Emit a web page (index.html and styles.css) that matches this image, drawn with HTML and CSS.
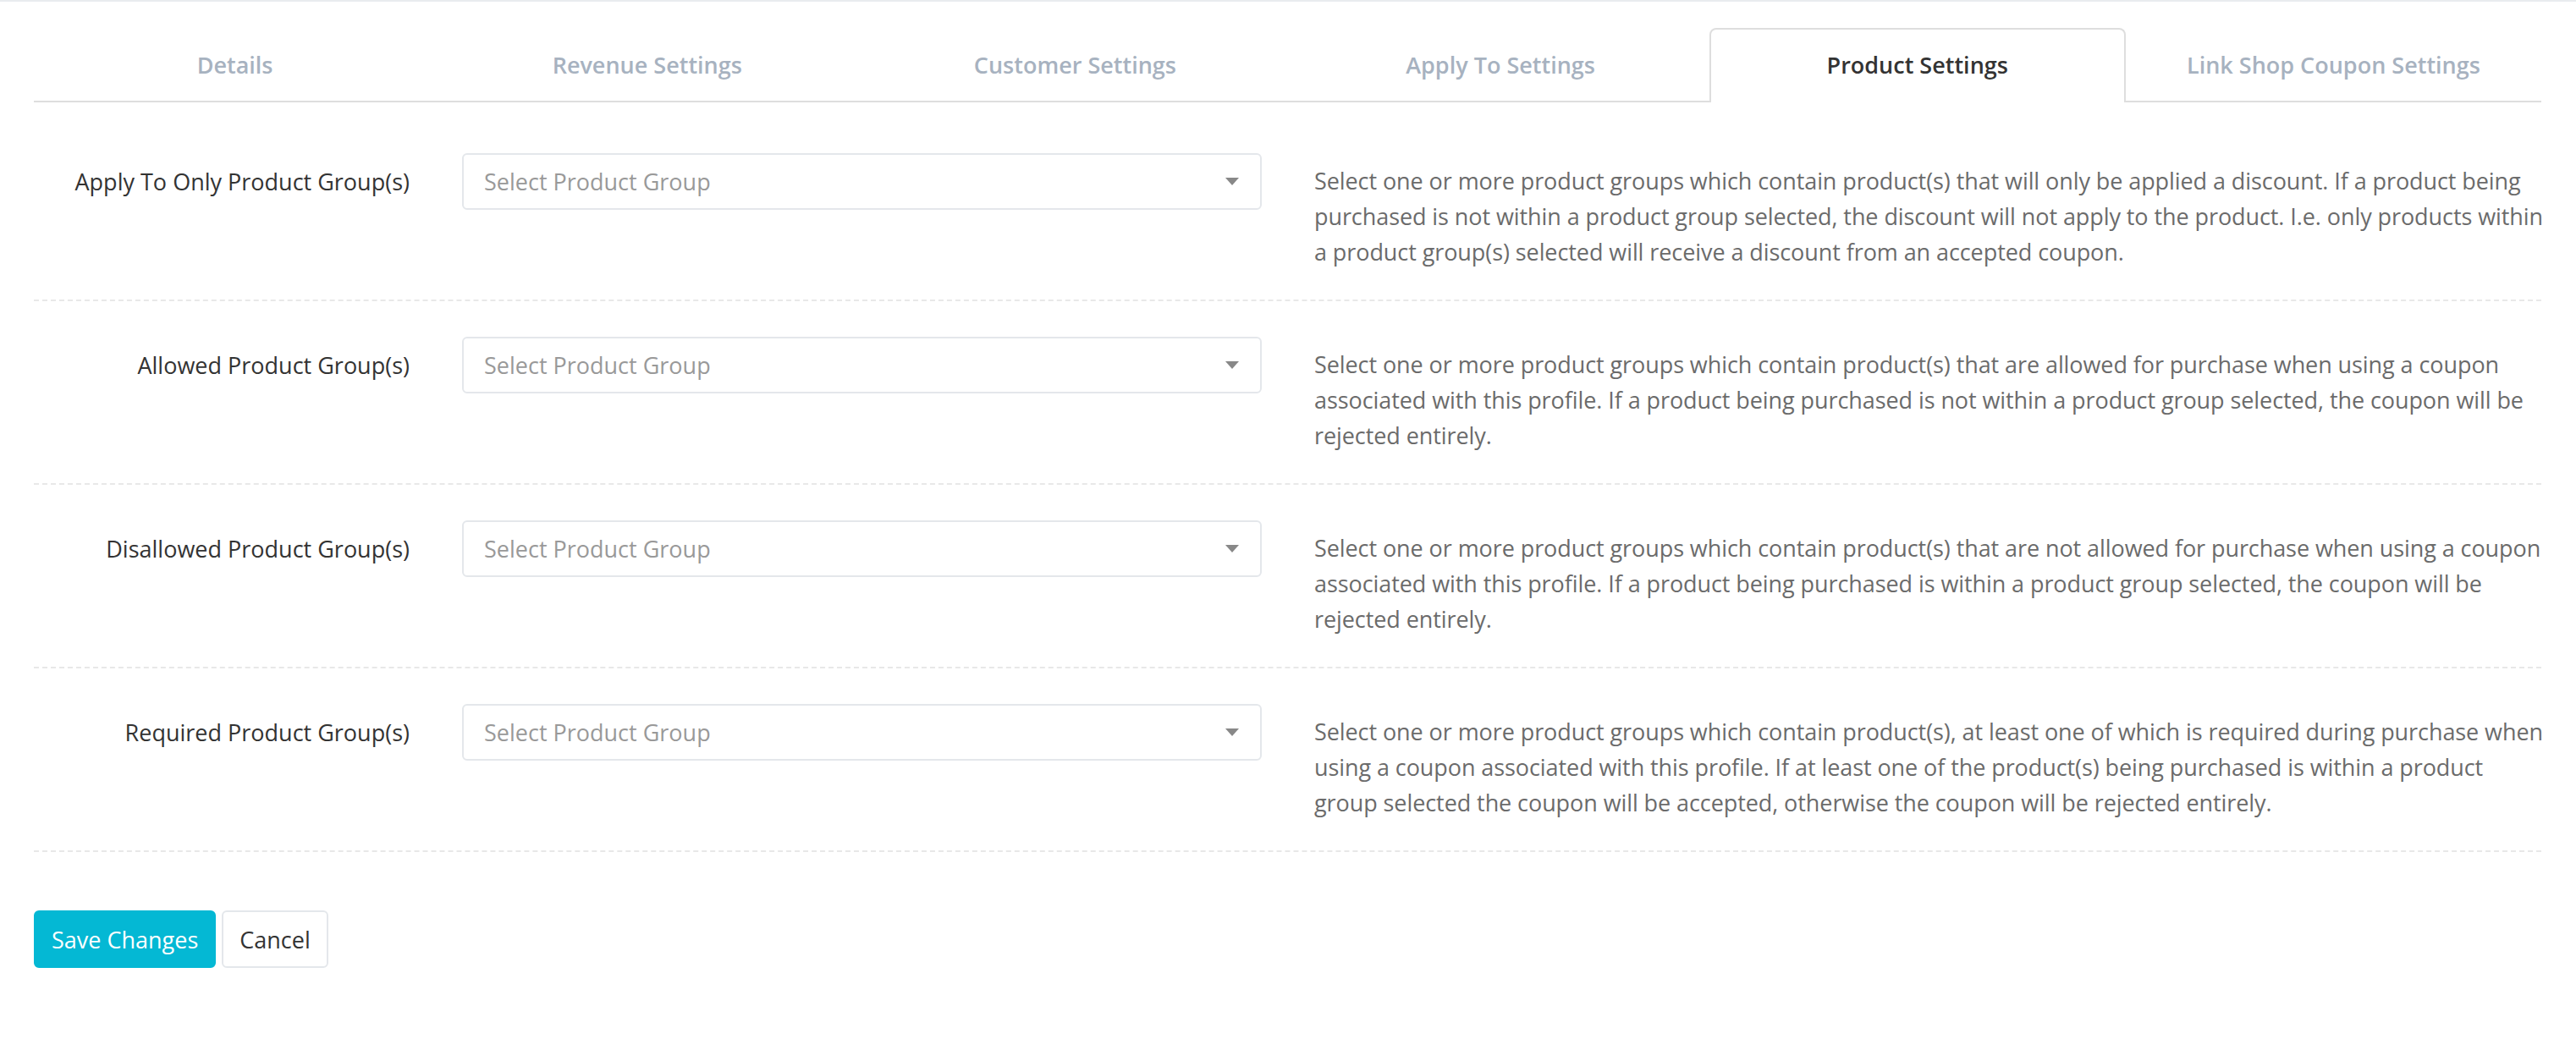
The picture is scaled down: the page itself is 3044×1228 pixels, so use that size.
FILE: index.html
```html
<!DOCTYPE html>
<html>
<head>
  <title>Coupon Profile - Product Settings</title>
  <link rel="stylesheet" href="styles.css">
</head>
<body>

<div class="page">
  <ul class="tabs">
    <li class="tab">Details</li>
    <li class="tab">Revenue Settings</li>
    <li class="tab">Customer Settings</li>
    <li class="tab">Apply To Settings</li>
    <li class="tab active">Product Settings</li>
    <li class="tab">Link Shop Coupon Settings</li>
  </ul>

  <form class="settings-form">
    <div class="form-row">
      <label class="row-label">Apply To Only Product Group(s)</label>
      <div class="select-box">
        <span class="placeholder">Select Product Group</span>
        <span class="caret"></span>
      </div>
      <p class="help">Select one or more product groups which contain product(s) that will only be applied a discount. If a product being purchased is not within a product group selected, the discount will not apply to the product. I.e. only products within a product group(s) selected will receive a discount from an accepted coupon.</p>
    </div>

    <div class="form-row">
      <label class="row-label">Allowed Product Group(s)</label>
      <div class="select-box">
        <span class="placeholder">Select Product Group</span>
        <span class="caret"></span>
      </div>
      <p class="help">Select one or more product groups which contain product(s) that are allowed for purchase when using a coupon associated with this profile. If a product being purchased is not within a product group selected, the coupon will be rejected entirely.</p>
    </div>

    <div class="form-row">
      <label class="row-label">Disallowed Product Group(s)</label>
      <div class="select-box">
        <span class="placeholder">Select Product Group</span>
        <span class="caret"></span>
      </div>
      <p class="help">Select one or more product groups which contain product(s) that are not allowed for purchase when using a coupon associated with this profile. If a product being purchased is within a product group selected, the coupon will be rejected entirely.</p>
    </div>

    <div class="form-row">
      <label class="row-label">Required Product Group(s)</label>
      <div class="select-box">
        <span class="placeholder">Select Product Group</span>
        <span class="caret"></span>
      </div>
      <p class="help">Select one or more product groups which contain product(s), at least one of which is required during purchase when using a coupon associated with this profile. If at least one of the product(s) being purchased is within a product group selected the coupon will be accepted, otherwise the coupon will be rejected entirely.</p>
    </div>

    <div class="form-actions">
      <button type="button" class="btn btn-primary">Save Changes</button>
      <button type="button" class="btn btn-default">Cancel</button>
    </div>
  </form>
</div>

</body>
</html>
```

FILE: styles.css
```css
body {
  margin: 0;
  font-family: "Open Sans", Lato, sans-serif;
  font-size: 27px;
  color: #333;
  background: #fff;
  border-top: 2px solid #e9ecef;
}

.page {
  padding: 0 41px 0 40px;
}

/* Tabs */
.tabs {
  list-style: none;
  margin: 31px 0 0;
  padding: 0;
  display: grid;
  grid-template-columns: 475fr 499fr 512fr 493fr 492fr 491fr;
  border-bottom: 2px solid #dedede;
}

.tab {
  height: 84px;
  line-height: 84px;
  text-align: center;
  font-weight: 600;
  font-size: 27px;
  color: #a7b2c0;
  border: 2px solid transparent;
  border-bottom: none;
  margin-bottom: -2px;
}

.tab.active {
  color: #333;
  background: #fff;
  border-color: #dedede;
  border-radius: 8px 8px 0 0;
  height: 86px;
}

/* Form rows */
.settings-form {
  margin-top: 18px;
}

.form-row {
  display: grid;
  grid-template-columns: 444px 945px 1fr;
  column-gap: 62px;
  align-items: start;
  padding: 42px 0 35px;
  border-bottom: 2px dashed #e8e8e8;
}

.row-label {
  text-align: right;
  line-height: 67px;
  color: #333;
}

.select-box {
  height: 67px;
  box-sizing: border-box;
  border: 2px solid #e4e7eb;
  border-radius: 6px;
  padding: 0 25px 0 24px;
  display: flex;
  align-items: center;
  justify-content: space-between;
}

.placeholder {
  color: #999;
}

.caret {
  width: 0;
  height: 0;
  border-left: 8px solid transparent;
  border-right: 8px solid transparent;
  border-top: 9px solid #888;
}

.help {
  margin: 12px -5px 0 0;
  line-height: 42px;
  letter-spacing: -0.08px;
  font-kerning: none;
  color: #6b6b6b;
}

/* Buttons */
.form-actions {
  display: flex;
  gap: 7px;
  margin-top: 69px;
}

.btn {
  height: 68px;
  padding: 0 19px;
  font-family: inherit;
  font-size: 27px;
  border-radius: 6px;
  cursor: pointer;
}

.btn-primary {
  background-color: #04b8d4;
  border: 2px solid #04b8d4;
  color: #fff;
}

.btn-default {
  background-color: #fff;
  border: 2px solid #e4e7eb;
  color: #333;
}
```
